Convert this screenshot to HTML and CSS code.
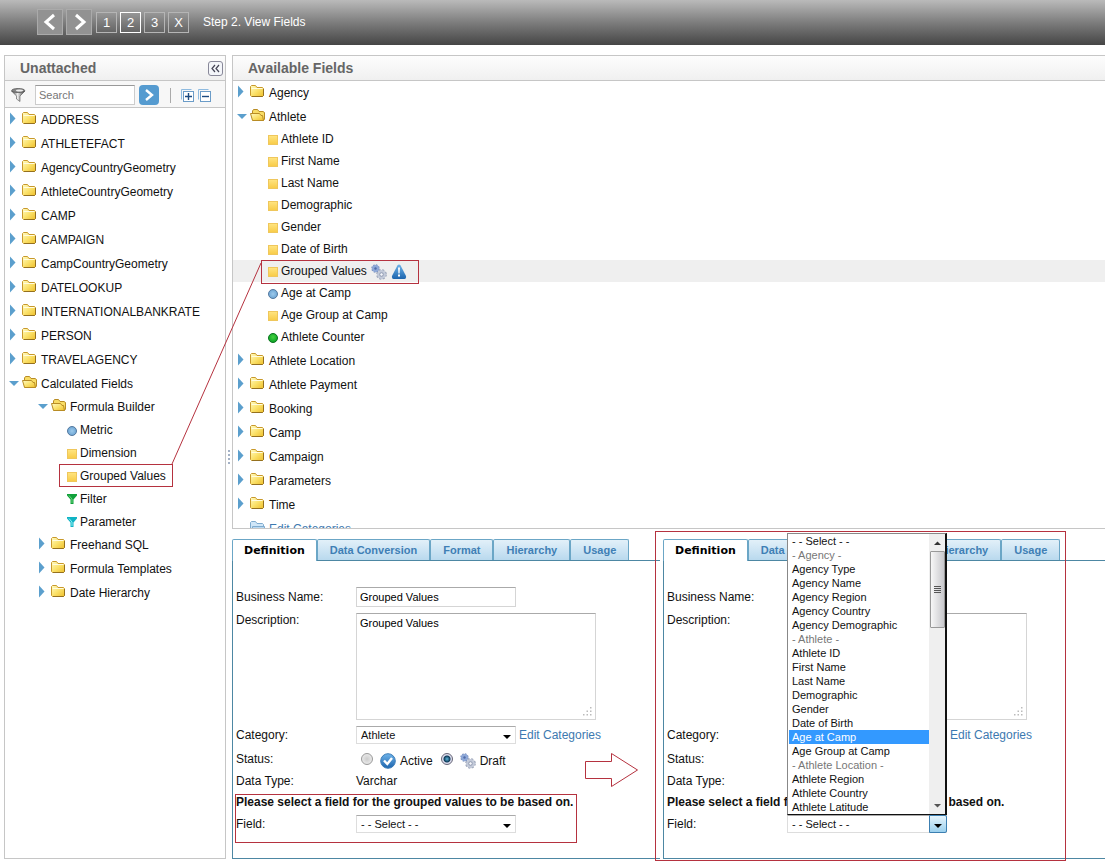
FILE: index.html
```html
<!DOCTYPE html>
<html lang="en">
  <head>
    <meta charset="utf-8">
    <title>View Fields</title>
    <meta name="viewport" content="width=device-width, initial-scale=1">
    <link rel="stylesheet" href="styles.css">
  </head>
  <body>
    <!-- Icon sprite -->
    <svg class="sprite" aria-hidden="true">
      <defs>
        <linearGradient id="g-folder" x1="0" y1="0" x2="1" y2="1">
          <stop offset="0" stop-color="#fffbc4"/><stop offset="0.5" stop-color="#fbe26c"/><stop offset="1" stop-color="#eebf2c"/>
        </linearGradient>
        <linearGradient id="g-square" x1="0" y1="0" x2="0" y2="1">
          <stop offset="0" stop-color="#ffe582"/><stop offset="1" stop-color="#f8cb46"/>
        </linearGradient>
        <linearGradient id="g-blue" x1="0" y1="0" x2="0" y2="1">
          <stop offset="0" stop-color="#6fb4ea"/><stop offset="1" stop-color="#1c64ad"/>
        </linearGradient>
        <radialGradient id="g-metric">
          <stop offset="0" stop-color="#9dcaec"/><stop offset="1" stop-color="#6ea6d4"/>
        </radialGradient>
        <radialGradient id="g-counter" cx="0.5" cy="0.4">
          <stop offset="0" stop-color="#45d23f"/><stop offset="1" stop-color="#12a82a"/>
        </radialGradient>
        <linearGradient id="g-metal">
          <stop offset="0" stop-color="#444"/><stop offset="0.45" stop-color="#eee"/><stop offset="1" stop-color="#333"/>
        </linearGradient>
      </defs>
      <symbol id="closed" viewBox="0 1 10 16"><path d="M1 1.5L6.5 7.5L1 13.5Z" fill="#5b9fcd"/></symbol>
      <symbol id="open" viewBox="0 0 10 16"><path d="M0 5H10L5 10Z" fill="#5b9fcd"/></symbol>
      <symbol id="folder" viewBox="0 1 15 16">
        <path d="M0.5 11.5V2.5L1.5 1.5H5.5L7 3.5H12.5L13.5 4.5V11.5L12.5 12.5H1.5Z" fill="url(#g-folder)" stroke="#c8992c"/>
        <path d="M1.5 4.5H12.5" stroke="#fffce0"/>
        <path d="M2 12.5H12.5L13.5 11.5V5" fill="none" stroke="#94701f"/>
      </symbol>
      <symbol id="folder-open" viewBox="0 1 15 16">
        <path d="M2.5 12V3L3.5 1.5H7.5L9 3.5H13L14.5 4.5V11L13.5 12.5H3Z" fill="#f8dc64" stroke="#b88c25"/>
        <path d="M0.5 5.5H9.5L11 7.5H12.5L13.5 12.5H2.5Z" fill="url(#g-folder)" stroke="#b88c25"/>
      </symbol>
      <symbol id="folder-blue" viewBox="0 0 15 16">
        <path d="M0.5 11.5V1.5L1.5 0.5H5.5L7 2.5H12.5L13.5 3.5V11.5L12.5 13.5H1.5Z" fill="#cfe6f8" stroke="#7fabce"/>
        <path d="M2.5 13.5V5.5H14.5V13.5Z" fill="#b7d8f2" stroke="#7fabce"/>
      </symbol>
      <symbol id="square" viewBox="0 0 10 12"><rect x="0.5" y="1.5" width="9" height="9" fill="url(#g-square)" stroke="#efc75c"/></symbol>
      <symbol id="metric" viewBox="0 0 10 12"><circle cx="5" cy="6" r="4.5" fill="url(#g-metric)" stroke="#55799f"/></symbol>
      <symbol id="counter" viewBox="0 0 10 12"><circle cx="5" cy="6" r="4.5" fill="url(#g-counter)" stroke="#0c7420"/></symbol>
      <symbol id="filter" viewBox="0 0 10 12"><path d="M0 0H10V1.5L6.5 5.5V10H3.5V5.5L0 1.5Z" fill="#11a03a"/><path d="M2 1.5L5 5V9" stroke="#6bd67f" fill="none"/></symbol>
      <symbol id="parameter" viewBox="0 0 10 12"><path d="M0 0H10V1.5L6.5 5.5V10H3.5V5.5L0 1.5Z" fill="#10b3c4"/><path d="M2 1.5L5 5V9" stroke="#8df1f5" fill="none"/></symbol>
      <symbol id="gears" viewBox="0 0 16 16">
        <circle cx="4.5" cy="4.5" r="3.2" fill="#8fa9d8" stroke="#7288b8" stroke-width="2" stroke-dasharray="1.5 1"/>
        <circle cx="4.5" cy="4.5" r="3.4" fill="#8fa9d8"/><circle cx="4.5" cy="4.5" r="1.2" fill="#4f6ca9"/>
        <circle cx="10.5" cy="10.5" r="4.3" fill="#c3cad9" stroke="#99a2b6" stroke-width="2" stroke-dasharray="2 1.4"/>
        <circle cx="10.5" cy="10.5" r="4.4" fill="#c3cad9"/><circle cx="10.5" cy="10.5" r="1.8" fill="#f5f6fa" stroke="#8f99b0"/>
      </symbol>
      <symbol id="alert" viewBox="0 0 16 16">
        <path d="M6.4 1.5Q8 -0.5 9.6 1.5L15 12Q15.5 15 13.5 15H2.5Q0.5 15 1 12Z" fill="url(#g-blue)"/>
        <path d="M7 3.5H9L8.6 9.5H7.4Z" fill="#fff"/><rect x="7" y="10.5" width="2" height="2" fill="#fff"/>
      </symbol>
      <symbol id="check" viewBox="0 0 16 16">
        <circle cx="8" cy="8" r="7.3" fill="url(#g-blue)" stroke="#3c7db8"/>
        <path d="M4 7.5L7.3 11L12 5" fill="none" stroke="#fff" stroke-width="2.4"/>
      </symbol>
      <symbol id="grip" viewBox="0 0 9 9">
        <path d="M7 0h1.5v1.5H7zM7 3.5h1.5V5H7zM7 7h1.5v1.5H7zM3.5 3.5H5V5H3.5zM3.5 7H5v1.5H3.5zM0 7h1.5v1.5H0z" fill="#bbb"/>
      </symbol>
    </svg>

    <header class="topbar">
      <button class="nav" aria-label="Previous"><svg width="24" height="24"><path d="M16 5L8 12L16 19" fill="none" stroke="#fff" stroke-width="3"/></svg></button>
      <button class="nav" aria-label="Next"><svg width="24" height="24"><path d="M9 5L17 12L9 19" fill="none" stroke="#fff" stroke-width="3"/></svg></button>
      <button class="step">1</button>
      <button class="step current">2</button>
      <button class="step">3</button>
      <button class="step">X</button>
      <span class="step-title">Step 2. View Fields</span>
    </header>

    <main class="main">
      <section class="panel unattached">
        <div class="panel-head">
          <h2>Unattached</h2>
          <button class="collapse" aria-label="Collapse"><svg width="13" height="13"><path d="M6 3L3 6.5L6 10M10 3L7 6.5L10 10" fill="none" stroke="#445" stroke-width="1.2"/></svg></button>
        </div>
        <div class="toolbar">
          <svg class="funnel" width="16" height="16"><path d="M1.5 4L6.5 9V12L10 14.5V9L15 4Z" fill="url(#g-metal)" stroke="#555" stroke-width="0.6"/><ellipse cx="8.2" cy="3.5" rx="6.5" ry="2" fill="#888" stroke="#555" stroke-width="0.8"/><ellipse cx="9.5" cy="3.5" rx="3.5" ry="1" fill="#eee"/></svg>
          <input class="search" type="text" placeholder="Search" aria-label="Search">
          <button class="go" aria-label="Go"><svg width="20" height="20"><path d="M7 5L13 10L7 15" fill="none" stroke="#fff" stroke-width="2.4"/></svg></button>
          <span class="divider"></span>
          <button class="expand" aria-label="Expand all"><svg width="13" height="13"><path d="M0.5 10.5V0.5H10.5" fill="none" stroke="#8fbbe0"/><rect x="2.5" y="2.5" width="10" height="10" fill="#fff" stroke="#6b9cc8"/><path d="M4 7.5H11M7.5 4V11" stroke="#1c4a80" stroke-width="1.4"/></svg></button>
          <button class="expand" aria-label="Collapse all"><svg width="13" height="13"><path d="M0.5 10.5V0.5H10.5" fill="none" stroke="#8fbbe0"/><rect x="2.5" y="2.5" width="10" height="10" fill="#fff" stroke="#6b9cc8"/><path d="M4 7.5H11" stroke="#1c4a80" stroke-width="1.4"/></svg></button>
        </div>
        <ul class="tree">
          <li class="node"><svg class="twisty"><use href="#closed"/></svg><svg class="folder"><use href="#folder"/></svg>ADDRESS</li>
          <li class="node"><svg class="twisty"><use href="#closed"/></svg><svg class="folder"><use href="#folder"/></svg>ATHLETEFACT</li>
          <li class="node"><svg class="twisty"><use href="#closed"/></svg><svg class="folder"><use href="#folder"/></svg>AgencyCountryGeometry</li>
          <li class="node"><svg class="twisty"><use href="#closed"/></svg><svg class="folder"><use href="#folder"/></svg>AthleteCountryGeometry</li>
          <li class="node"><svg class="twisty"><use href="#closed"/></svg><svg class="folder"><use href="#folder"/></svg>CAMP</li>
          <li class="node"><svg class="twisty"><use href="#closed"/></svg><svg class="folder"><use href="#folder"/></svg>CAMPAIGN</li>
          <li class="node"><svg class="twisty"><use href="#closed"/></svg><svg class="folder"><use href="#folder"/></svg>CampCountryGeometry</li>
          <li class="node"><svg class="twisty"><use href="#closed"/></svg><svg class="folder"><use href="#folder"/></svg>DATELOOKUP</li>
          <li class="node"><svg class="twisty"><use href="#closed"/></svg><svg class="folder"><use href="#folder"/></svg>INTERNATIONALBANKRATE</li>
          <li class="node"><svg class="twisty"><use href="#closed"/></svg><svg class="folder"><use href="#folder"/></svg>PERSON</li>
          <li class="node"><svg class="twisty"><use href="#closed"/></svg><svg class="folder"><use href="#folder"/></svg>TRAVELAGENCY</li>
          <li class="node short"><svg class="twisty"><use href="#open"/></svg><svg class="folder"><use href="#folder-open"/></svg>Calculated Fields</li>
          <li>
            <ul class="branch">
              <li class="node short"><svg class="twisty"><use href="#open"/></svg><svg class="folder"><use href="#folder-open"/></svg>Formula Builder</li>
              <li>
                <ul class="branch">
                  <li class="leaf"><svg class="dot"><use href="#metric"/></svg>Metric</li>
                  <li class="leaf"><svg class="dot"><use href="#square"/></svg>Dimension</li>
                  <li class="leaf"><svg class="dot"><use href="#square"/></svg>Grouped Values</li>
                  <li class="leaf"><svg class="dot"><use href="#filter"/></svg>Filter</li>
                  <li class="leaf"><svg class="dot"><use href="#parameter"/></svg>Parameter</li>
                </ul>
              </li>
              <li class="node"><svg class="twisty"><use href="#closed"/></svg><svg class="folder"><use href="#folder"/></svg>Freehand SQL</li>
              <li class="node"><svg class="twisty"><use href="#closed"/></svg><svg class="folder"><use href="#folder"/></svg>Formula Templates</li>
              <li class="node"><svg class="twisty"><use href="#closed"/></svg><svg class="folder"><use href="#folder"/></svg>Date Hierarchy</li>
            </ul>
          </li>
        </ul>
      </section>

      <div class="splitter"><i></i><i></i><i></i><i></i></div>

      <div class="content">
        <section class="panel available">
          <div class="panel-head">
            <h2>Available Fields</h2>
          </div>
          <ul class="tree">
            <li class="node"><svg class="twisty"><use href="#closed"/></svg><svg class="folder"><use href="#folder"/></svg>Agency</li>
            <li class="node short"><svg class="twisty"><use href="#open"/></svg><svg class="folder"><use href="#folder-open"/></svg>Athlete</li>
            <li>
              <ul class="fields">
                <li class="leaf"><svg class="dot"><use href="#square"/></svg>Athlete ID</li>
                <li class="leaf"><svg class="dot"><use href="#square"/></svg>First Name</li>
                <li class="leaf"><svg class="dot"><use href="#square"/></svg>Last Name</li>
                <li class="leaf"><svg class="dot"><use href="#square"/></svg>Demographic</li>
                <li class="leaf"><svg class="dot"><use href="#square"/></svg>Gender</li>
                <li class="leaf"><svg class="dot"><use href="#square"/></svg>Date of Birth</li>
                <li class="leaf selected"><svg class="dot"><use href="#square"/></svg>Grouped Values<svg class="flag"><use href="#gears"/></svg><svg class="flag"><use href="#alert"/></svg></li>
                <li class="leaf"><svg class="dot"><use href="#metric"/></svg>Age at Camp</li>
                <li class="leaf"><svg class="dot"><use href="#square"/></svg>Age Group at Camp</li>
                <li class="leaf"><svg class="dot"><use href="#counter"/></svg>Athlete Counter</li>
              </ul>
            </li>
            <li class="node"><svg class="twisty"><use href="#closed"/></svg><svg class="folder"><use href="#folder"/></svg>Athlete Location</li>
            <li class="node"><svg class="twisty"><use href="#closed"/></svg><svg class="folder"><use href="#folder"/></svg>Athlete Payment</li>
            <li class="node"><svg class="twisty"><use href="#closed"/></svg><svg class="folder"><use href="#folder"/></svg>Booking</li>
            <li class="node"><svg class="twisty"><use href="#closed"/></svg><svg class="folder"><use href="#folder"/></svg>Camp</li>
            <li class="node"><svg class="twisty"><use href="#closed"/></svg><svg class="folder"><use href="#folder"/></svg>Campaign</li>
            <li class="node"><svg class="twisty"><use href="#closed"/></svg><svg class="folder"><use href="#folder"/></svg>Parameters</li>
            <li class="node"><svg class="twisty"><use href="#closed"/></svg><svg class="folder"><use href="#folder"/></svg>Time</li>
            <li class="node short"><svg class="twisty"></svg><svg class="folder"><use href="#folder-blue"/></svg><a href="#">Edit Categories</a></li>
          </ul>
        </section>

        <div class="details">
          <section class="detail">
            <div class="tabs">
              <button class="tab active">Definition</button>
              <button class="tab">Data Conversion</button>
              <button class="tab">Format</button>
              <button class="tab">Hierarchy</button>
              <button class="tab">Usage</button>
            </div>
            <form class="form">
              <div class="row">
                <label for="name1">Business Name:</label>
                <input class="text" id="name1" type="text" value="Grouped Values">
              </div>
              <div class="row top">
                <label for="desc1">Description:</label>
                <div class="area"><textarea id="desc1">Grouped Values</textarea><svg class="grip"><use href="#grip"/></svg></div>
              </div>
              <div class="row narrow">
                <label for="cat1">Category:</label>
                <div class="drop"><select id="cat1"><option>Athlete</option></select></div>
                <a class="edit" href="#">Edit Categories</a>
              </div>
              <div class="row line">
                <span class="label">Status:</span>
                <div class="status">
                  <input type="radio" name="status1" id="active1"><label for="active1"><svg class="flag"><use href="#check"/></svg>Active</label>
                  <input type="radio" name="status1" id="draft1" checked><label for="draft1"><svg class="flag"><use href="#gears"/></svg>Draft</label>
                </div>
              </div>
              <div class="row line">
                <span class="label">Data Type:</span>
                <span>Varchar</span>
              </div>
              <p class="prompt">Please select a field for the grouped values to be based on.</p>
              <div class="row field">
                <label for="field1">Field:</label>
                <div class="drop"><select id="field1"><option>- - Select - -</option></select></div>
              </div>
            </form>
          </section>

          <section class="detail marked">
            <div class="tabs">
              <button class="tab active">Definition</button>
              <button class="tab">Data Conversion</button>
              <button class="tab">Format</button>
              <button class="tab">Hierarchy</button>
              <button class="tab">Usage</button>
            </div>
            <form class="form">
              <div class="row">
                <label for="name2">Business Name:</label>
                <input class="text" id="name2" type="text">
              </div>
              <div class="row top">
                <label for="desc2">Description:</label>
                <div class="area"><textarea id="desc2"></textarea><svg class="grip"><use href="#grip"/></svg></div>
              </div>
              <div class="row narrow">
                <label for="cat2">Category:</label>
                <div class="drop"><select id="cat2"></select></div>
                <a class="edit" href="#">Edit Categories</a>
              </div>
              <div class="row line">
                <span class="label">Status:</span>
              </div>
              <div class="row line">
                <span class="label">Data Type:</span>
              </div>
              <p class="prompt">Please select a field for the grouped values to be based on.</p>
              <div class="row field">
                <label for="field2">Field:</label>
                <div class="drop opened">
                  <select id="field2"><option>- - Select - -</option></select>
                  <div class="menu">
                    <ul class="options" role="listbox">
                      <li role="option">- - Select - -</li>
                      <li class="group">- Agency -</li>
                      <li role="option">Agency Type</li>
                      <li role="option">Agency Name</li>
                      <li role="option">Agency Region</li>
                      <li role="option">Agency Country</li>
                      <li role="option">Agency Demographic</li>
                      <li class="group">- Athlete -</li>
                      <li role="option">Athlete ID</li>
                      <li role="option">First Name</li>
                      <li role="option">Last Name</li>
                      <li role="option">Demographic</li>
                      <li role="option">Gender</li>
                      <li role="option">Date of Birth</li>
                      <li role="option" class="hover" aria-selected="true">Age at Camp</li>
                      <li role="option">Age Group at Camp</li>
                      <li class="group">- Athlete Location -</li>
                      <li role="option">Athlete Region</li>
                      <li role="option">Athlete Country</li>
                      <li role="option">Athlete Latitude</li>
                    </ul>
                    <div class="scrollbar">
                      <svg width="16" height="17"><path d="M5 11L8.5 7.5L12 11Z" fill="#333"/></svg>
                      <div class="thumb"><i></i><i></i><i></i><i></i></div>
                      <svg class="down" width="16" height="17"><path d="M5 7L8.5 10.5L12 7Z" fill="#555"/></svg>
                    </div>
                  </div>
                </div>
              </div>
            </form>
          </section>
        </div>
      </div>
    </main>

    <!-- Red callouts drawn over the page -->
    <svg class="callouts" width="1108" height="863" fill="none" stroke="#b5323f" aria-hidden="true">
      <rect x="59.5" y="464.5" width="113" height="22"/>
      <rect x="261.5" y="260.5" width="157" height="23"/>
      <path d="M172 464L261 263"/>
      <rect x="235.5" y="794.5" width="341" height="48"/>
      <path d="M585.5 761.5H611.5V753.5L637.5 770L611.5 786.5V778.5H585.5Z"/>
    </svg>
  </body>
</html>
```

FILE: styles.css
```css
* {
  box-sizing: border-box;
}
body {
  position: relative;
  margin: 0;
  background: #fff;
  color: #111;
  font-family: "Liberation Sans", Arial, sans-serif;
  font-size: 12px;
  line-height: 14px;
}
ul {
  margin: 0;
  padding: 0;
  list-style: none;
}
a {
  color: #3d79b0;
  text-decoration: none;
}
button, input, select, textarea {
  font-family: inherit;
  margin: 0;
}
button {
  padding: 0;
  display: flex;
  align-items: center;
  justify-content: center;
}
svg {
  flex: none;
}
.sprite {
  position: absolute;
  width: 0;
  height: 0;
}

/* Top bar */
.topbar {
  display: flex;
  align-items: center;
  gap: 3px;
  height: 45px;
  margin-right: 3px;
  padding: 0 0 1px 37px;
  background: linear-gradient(#bababa, #7d7d7d 50%, #454545);
}
.nav {
  width: 26px;
  height: 26px;
  border: 1px solid #aaa;
  background: #929292;
}
.step {
  width: 21px;
  height: 21px;
  border: 1px solid #b5b5b5;
  background: transparent;
  color: #fff;
  font-size: 13px;
}
.nav + .step {
  margin-left: 1px;
}
.step.current {
  border-color: #fff;
}
.step-title {
  margin-left: 11px;
  color: #fff;
}

/* Panels */
.main {
  display: flex;
  padding: 10px 3px 4px 4px;
}
.panel {
  border: 1px solid #c6c6c6;
}
.unattached {
  flex: none;
  width: 222px;
}
.panel-head {
  display: flex;
  align-items: center;
  justify-content: space-between;
  height: 25px;
  padding: 0 2px 0 15px;
  border-bottom: 1px solid #c6c6c6;
  background: linear-gradient(#fdfdfd, #f0f0f0);
}
.panel-head h2 {
  margin: 0;
  color: #666;
  font-size: 14px;
  line-height: 16px;
}
.collapse {
  width: 15px;
  height: 15px;
  border: 1px solid #889;
  border-radius: 3px;
  background: #f4f6fa;
}
.toolbar {
  display: flex;
  align-items: center;
  height: 27px;
  padding: 2px 0 0 5px;
  border-bottom: 1px solid #c6c6c6;
  background: #f7f7f7;
}
.search {
  width: 100px;
  height: 20px;
  margin: 0 4px 0 9px;
  padding: 0 3px;
  border: 1px solid #ccc;
  border-top-color: #999;
  font-size: 11px;
}
.search::placeholder {
  color: #777;
}
.go {
  width: 20px;
  height: 20px;
  border: 0;
  border-radius: 4px;
  background: #559bd0;
}
.divider {
  width: 1px;
  height: 15px;
  margin: 0 10px 0 11px;
  background: #aaa;
}
.expand {
  margin-right: 4px;
  border: 0;
  background: transparent;
}
.splitter {
  display: flex;
  flex: none;
  flex-direction: column;
  align-items: center;
  justify-content: center;
  gap: 2px;
  width: 6px;
}
.splitter i {
  width: 2px;
  height: 2px;
  background: #a3b1c6;
}
.content {
  flex: 1;
  min-width: 0;
}
.available {
  border-right: 0;
}
.available .tree {
  height: 447px;
  overflow: hidden;
}

/* Trees */
.node, .leaf {
  display: flex;
  align-items: center;
  white-space: nowrap;
}
.node {
  height: 24px;
  padding-left: 4px;
}
.node.short, .leaf {
  height: 23px;
}
.twisty {
  width: 10px;
  height: 16px;
  margin-right: 3px;
}
.folder {
  width: 15px;
  height: 16px;
  margin-right: 4px;
}
.dot {
  width: 10px;
  height: 12px;
  margin: 2px 3px 0 0;
}
.leaf {
  padding-left: 4px;
}
.branch {
  padding-left: 29px;
}
.fields {
  padding-bottom: 1px;
}
.fields .leaf {
  height: 22px;
  padding-left: 35px;
}
.fields .leaf.selected {
  background: #efefef;
}
.flag {
  width: 16px;
  height: 16px;
}
.leaf .flag {
  margin: 2px 0 0 4px;
}

/* Detail panes */
.details {
  display: flex;
  gap: 3px;
  padding-top: 10px;
}
.detail {
  flex: 1;
  min-width: 0;
}
.detail:first-child {
  flex: 0 0 428px;
}
.tabs {
  display: flex;
  height: 22px;
  border-bottom: 1px solid #4d87a3;
}
.tab {
  height: 21px;
  padding: 0 12px;
  border: 1px solid #6ba6c6;
  border-bottom: 0;
  border-radius: 2px 2px 0 0;
  background: linear-gradient(#e2f0f9, #b9d9ee);
  color: #3f7fb5;
  font-size: 11px;
  font-weight: bold;
  white-space: nowrap;
}
.tab.active {
  height: 22px;
  padding: 0 11px;
  background: #fff;
  color: #000;
  font-family: "DejaVu Sans", sans-serif;
}
.form {
  padding: 26px 0 22px 3px;
  border-left: 1px solid #4d87a3;
  border-bottom: 1px solid #4d87a3;
}
.row {
  display: flex;
  align-items: center;
  padding-bottom: 6px;
}
.row > label, .row > .label {
  flex: none;
  width: 120px;
}
.row.top {
  align-items: flex-start;
}
.row.narrow {
  padding-bottom: 4px;
}
.row.line {
  height: 22px;
  padding: 0;
}
.row.field {
  height: 24px;
  padding: 0;
}
.text {
  width: 160px;
  height: 20px;
  padding: 0 3px;
  border: 1px solid #d5d5d5;
  border-top-color: #aaa;
  font-size: 11px;
}
.area {
  position: relative;
  display: flex;
}
.area textarea {
  width: 240px;
  height: 107px;
  padding: 2px 3px;
  border: 1px solid #d5d5d5;
  border-top-color: #aaa;
  font-size: 11px;
  line-height: 14px;
  resize: none;
}
.grip {
  position: absolute;
  right: 4px;
  bottom: 4px;
  width: 9px;
  height: 9px;
}
.drop {
  position: relative;
  flex: none;
  width: 160px;
  height: 18px;
}
.drop select {
  display: block;
  width: 100%;
  height: 18px;
  padding: 0 4px;
  border: 1px solid #ddd;
  border-top-color: #aaa;
  border-radius: 0;
  background: #fff;
  color: #111;
  font-size: 11px;
  appearance: none;
}
.drop::after {
  content: "";
  position: absolute;
  right: 5px;
  top: 9px;
  border: 4px solid transparent;
  border-top-color: #000;
  border-bottom: 0;
  pointer-events: none;
}
.drop.opened::before {
  content: "";
  position: absolute;
  right: 0;
  top: 0;
  width: 18px;
  height: 18px;
  border: 1px solid #3c7fb1;
  border-radius: 0 2px 2px 0;
  background: linear-gradient(#e5f4fc, #9bd0ee);
  box-sizing: border-box;
  pointer-events: none;
}
.edit {
  margin-left: 3px;
}
.status {
  display: flex;
  align-items: center;
  padding-left: 5px;
}
.status input {
  width: 12px;
  height: 12px;
  margin-right: 7px;
  border: 1px solid #999;
  border-radius: 50%;
  background: radial-gradient(#ccc, #f4f4f4);
  appearance: none;
}
.status input:checked {
  border-color: #667;
  background: radial-gradient(#5fb8dd 0, #0d3a58 3px, #dde 4px);
}
.status label {
  display: flex;
  align-items: center;
  gap: 4px;
  margin: 3px 8px 0 0;
}
.prompt {
  margin: 0;
  font-weight: bold;
  line-height: 20px;
  white-space: nowrap;
}

/* Open drop-down list */
.menu {
  position: absolute;
  left: 0;
  bottom: 100%;
  z-index: 2;
  display: flex;
  width: 160px;
  border: 1px solid #888;
  border-right: 2px solid #111;
  border-bottom-color: #111;
  background: #fff;
  font-size: 11px;
}
.options {
  flex: 1;
  padding-left: 1px;
}
.options li {
  height: 14px;
  padding-left: 3px;
  white-space: nowrap;
}
.options .group {
  color: #777;
}
.options .hover {
  background: #3399ff;
  color: #fff;
}
.scrollbar {
  display: flex;
  flex-direction: column;
  align-items: center;
  width: 16px;
  background: #efefef;
}
.thumb {
  display: flex;
  flex-direction: column;
  align-items: center;
  justify-content: center;
  gap: 1px;
  width: 15px;
  height: 77px;
  border: 1px solid #999;
  border-radius: 1px;
  background: linear-gradient(to right, #f7f7f7, #c8c8cc);
}
.thumb i {
  width: 7px;
  height: 1px;
  background: #555;
}
.scrollbar .down {
  margin-top: auto;
}

/* Callouts */
.marked {
  position: relative;
}
.marked::after {
  content: "";
  position: absolute;
  top: -8px;
  bottom: -2px;
  left: -8px;
  width: 409px;
  border: 1px solid #b5323f;
  pointer-events: none;
}
.callouts {
  position: absolute;
  top: 0;
  left: 0;
  pointer-events: none;
}
```
